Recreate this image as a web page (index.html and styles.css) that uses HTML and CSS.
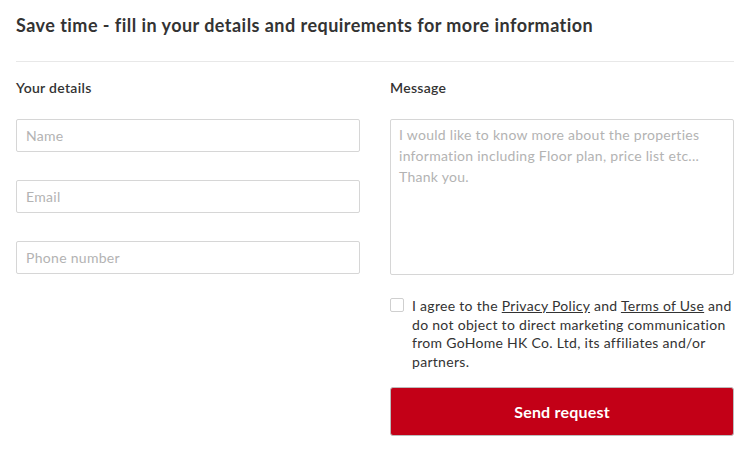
FILE: index.html
```html
<!DOCTYPE html>
<html lang="en">
<head>
<meta charset="utf-8">
<title>Enquiry form</title>
<link rel="stylesheet" href="styles.css">
</head>
<body>
<form class="form">
  <h1 class="title">Save time - fill in your details and requirements for more information</h1>
  <div class="divider"></div>
  <div class="cols">
    <div class="col">
      <div class="label">Your details</div>
      <input class="field" type="text" placeholder="Name">
      <input class="field" type="text" placeholder="Email">
      <input class="field" type="text" placeholder="Phone number">
    </div>
    <div class="col">
      <div class="label">Message</div>
      <textarea class="message" placeholder="I would like to know more about the properties information including Floor plan, price list etc... Thank you."></textarea>
      <div class="agree">
        <span class="box"></span>
        <p class="agree-text">I agree to the <a href="#">Privacy Policy</a> and <a href="#">Terms of Use</a> and do not object to direct marketing communication from GoHome HK Co. Ltd, its affiliates and/or partners.</p>
      </div>
      <button class="send" type="button">Send request</button>
    </div>
  </div>
</form>
</body>
</html>
```
FILE: styles.css
```css
html, body {
  margin: 0;
  background: #fff;
}
body {
  font-family: "Lato", "Open Sans", sans-serif;
  color: #333;
}
.form {
  padding: 13px 16px 0;
}
.title {
  margin: 0;
  font-size: 18px;
  line-height: 24px;
  font-weight: 700;
  letter-spacing: 0.46px;
  color: #333;
}
.divider {
  height: 1px;
  background: #e8e8e8;
  margin-top: 24px;
}
.cols {
  display: grid;
  grid-template-columns: 344px 344px;
  column-gap: 30px;
  margin-top: 16px;
}
.col {
  display: flex;
  flex-direction: column;
}
.label {
  font-size: 14px;
  line-height: 20px;
  font-weight: 600;
  letter-spacing: 0.3px;
  color: #333;
  margin-bottom: 21px;
}
.field {
  box-sizing: border-box;
  height: 33px;
  width: 100%;
  margin: 0 0 28px;
  padding: 0 9px;
  border: 1px solid #d6d6d6;
  border-radius: 2px;
  font-family: inherit;
  font-size: 14px;
  letter-spacing: 0.3px;
  color: #333;
  outline: none;
}
.message {
  box-sizing: border-box;
  height: 156px;
  width: 100%;
  margin: 0;
  padding: 4px 8px;
  border: 1px solid #d6d6d6;
  border-radius: 2px;
  font-family: inherit;
  font-size: 14px;
  line-height: 21px;
  letter-spacing: 0.28px;
  resize: none;
  outline: none;
}
.field::placeholder, .message::placeholder {
  color: #b3b3b3;
}
.agree {
  display: flex;
  gap: 8px;
  margin-top: 22px;
}
.box {
  flex: none;
  box-sizing: border-box;
  width: 14px;
  height: 14px;
  margin-top: 1px;
  border: 1px solid #cfcfcf;
  border-radius: 2px;
  background: #fff;
}
.agree-text {
  margin: 0;
  font-size: 14px;
  line-height: 18.5px;
  letter-spacing: 0.3px;
  color: #333;
}
.agree-text a {
  color: #333;
  text-decoration: underline;
}
.send {
  box-sizing: border-box;
  margin-top: 16px;
  height: 49px;
  width: 100%;
  border: 1px solid #bcbcbc;
  border-radius: 3px;
  background: #c30017;
  color: #fff;
  font-family: inherit;
  font-size: 16px;
  font-weight: 700;
  letter-spacing: 0.2px;
}
```
